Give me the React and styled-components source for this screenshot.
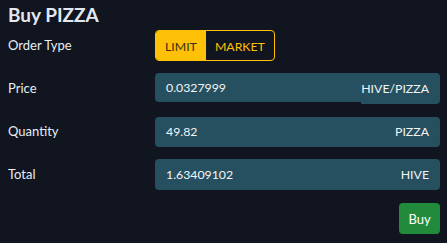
import React from "react";
import styled, { createGlobalStyle } from "styled-components";

const Global = createGlobalStyle`
  html, body { margin: 0; padding: 0; background: #10151f; }
  body { font-family: "Lato", "Noto Sans", sans-serif; color: #e6edf3; }
`;

const Panel = styled.div`
  padding: 3px 7px 0 8px;
`;

const Title = styled.h2`
  margin: 0;
  font-size: 19px;
  font-weight: 700;
  line-height: 24px;
  color: #e2e8f0;
`;

const Form = styled.div`
  display: grid;
  grid-template-columns: 147px 1fr;
  row-gap: 12px;
  margin-top: 3px;
  align-items: center;
`;

const Label = styled.div`
  font-size: 13px;
  line-height: 31px;
  color: #e6edf3;
`;

const Toggle = styled.div`
  display: inline-flex;
  justify-self: start;
  height: 31px;
  border: 1px solid #ffc107;
  border-radius: 4px;
  box-sizing: border-box;
  overflow: hidden;
`;

const ToggleBtn = styled.div`
  display: flex;
  align-items: center;
  padding: 1px 9px 0;
  font-size: 12.3px;
  background: ${(p) => (p.$active ? "#ffc107" : "transparent")};
  color: ${(p) => (p.$active ? "#3a2f10" : "#ffc107")};
`;

const Group = styled.div`
  display: flex;
  align-items: flex-start;
  height: ${(p) => (p.$tall ? 31 : 30)}px;
`;

const Field = styled.div`
  flex: 1;
  height: ${(p) => p.$h}px;
  display: flex;
  align-items: center;
  padding: 0 11px;
  background: #264f5f;
  border-radius: ${(p) => (p.$joined ? "4px 0 0 4px" : "4px")};
  font-size: 12.3px;
  color: #f2f5f7;
`;

const Value = styled.span`
  flex: 1;
`;

const Addon = styled.div`
  height: ${(p) => p.$h}px;
  display: flex;
  align-items: center;
  padding: 0 11px 0 0;
  background: #264f5f;
  border-radius: 0 4px 4px 0;
  font-size: 12.3px;
  color: #f2f5f7;
`;

const Actions = styled.div`
  display: flex;
  justify-content: flex-end;
  margin-top: 13px;
`;

const BuyButton = styled.button`
  width: 41px;
  height: 31px;
  border: none;
  border-radius: 4px;
  background: #228b3b;
  color: #fff;
  font-family: inherit;
  font-size: 13px;
  padding: 0;
`;

export default function App() {
  return (
    <>
      <Global />
      <Panel>
        <Title>Buy PIZZA</Title>
        <Form>
          <Label>Order Type</Label>
          <Toggle>
            <ToggleBtn $active>LIMIT</ToggleBtn>
            <ToggleBtn>MARKET</ToggleBtn>
          </Toggle>

          <Label>Price</Label>
          <Group $tall>
            <Field $h={29} $joined>
              <Value>0.0327999</Value>
            </Field>
            <Addon $h={31}>HIVE/PIZZA</Addon>
          </Group>

          <Label>Quantity</Label>
          <Group>
            <Field $h={30}>
              <Value>49.82</Value>
              <span>PIZZA</span>
            </Field>
          </Group>

          <Label>Total</Label>
          <Group $tall>
            <Field $h={31}>
              <Value>1.63409102</Value>
              <span>HIVE</span>
            </Field>
          </Group>
        </Form>
        <Actions>
          <BuyButton>Buy</BuyButton>
        </Actions>
      </Panel>
    </>
  );
}
